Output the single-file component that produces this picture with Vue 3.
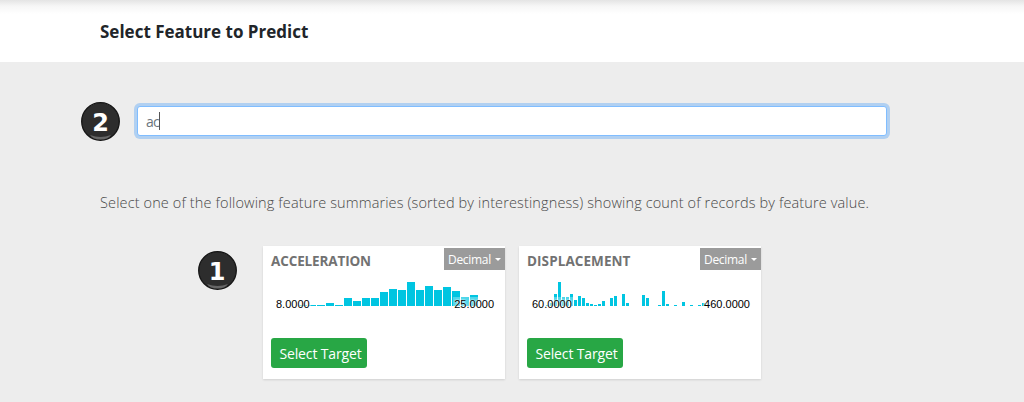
<script setup>
const cards = [
  {
    name: 'ACCELERATION', min: '8.0000', max: '25.0000', kind: 'accel', barWidth: 8,
    bars: [[36, 1], [45, 1], [54, 1], [63, 3], [72, 1], [81, 8], [90, 5], [99, 8], [108, 8], [117, 14], [126, 17], [135, 16], [144, 24], [153, 16], [162, 20], [171, 16], [180, 19], [189, 15], [198, 9], [207, 11]],
  },
  {
    name: 'DISPLACEMENT', min: '60.0000', max: '460.0000', kind: 'disp', barWidth: 3,
    bars: [[27, 1], [31, 3], [35, 12], [39, 24], [43, 9], [47, 9], [51, 12], [55, 6], [59, 10], [63, 8], [67, 3], [71, 2], [75, 1], [79, 2], [83, 5], [91, 8], [95, 10], [103, 12], [107, 3], [123, 11], [127, 8], [139, 1], [143, 15], [147, 2], [155, 1], [163, 4], [171, 1], [179, 1], [183, 3]],
  },
]
</script>

<template>
  <div class="page">
    <header class="header"><h1><span>Select Feature to Predict</span></h1></header>
    <main>
      <div class="search">
        <svg class="badge" width="39" height="39" viewBox="0 0 39 39">
          <circle cx="19.5" cy="19.5" r="18.8" fill="#2d2d2d" stroke="#151515" stroke-width="1.3" />
          <path d="M9 33Q19.5 37 30 33Q27 37.500 19.500 37.500T9 33Z" fill="#666" />
          <text x="19.5" y="28.700" text-anchor="middle">2</text>
        </svg>
        <div class="input"><span class="typed">ac</span><i class="caret"></i></div>
      </div>
      <p class="hint"><span>Select one of the following feature summaries (sorted by interestingness) showing count of records by feature value.</span></p>
      <div class="cards">
        <svg class="badge" width="39" height="39" viewBox="0 0 39 39">
          <circle cx="19.5" cy="19.5" r="18.8" fill="#2d2d2d" stroke="#151515" stroke-width="1.3" />
          <path d="M9 33Q19.500 37 30 33Q27 37.500 19.500 37.500T9 33Z" fill="#666" />
          <text x="19" y="28.700" text-anchor="middle">1</text>
        </svg>
        <section v-for="c in cards" :key="c.name" class="card">
          <div class="top">
            <h2 :class="c.kind">{{ c.name }}</h2>
            <button class="type"><span>Decimal</span><i class="arrow"></i></button>
          </div>
          <div class="chart">
            <svg width="242" height="24" shape-rendering="crispEdges">
              <rect v-for="b in c.bars" :key="b[0]" :x="b[0]" :y="24 - b[1]" :width="c.barWidth" :height="b[1]" fill="#00c5e1" />
            </svg>
            <span class="label min">{{ c.min }}</span>
            <span class="label max">{{ c.max }}</span>
          </div>
          <button class="select"><span>Select Target</span></button>
        </section>
      </div>
    </main>
  </div>
</template>

<style>
body { margin: 0; overflow: hidden; }
</style>

<style scoped>
.page { box-sizing: border-box; height: 402px; background: #ededed; font-family: "Open Sans", "Noto Sans", sans-serif; overflow: hidden; }
.header { height: 62px; background: linear-gradient(#e4e4e4, #f6f6f6 6px, #fff 14px); padding-left: 100px; }
h1 { margin: 0; font-size: 17px; line-height: 63px; font-weight: 700; color: #212529; letter-spacing: 0; white-space: nowrap; }
main { padding-top: 39px; }
.search { display: flex; align-items: center; height: 40px; padding-left: 81px; }
.badge { flex: none; display: block; overflow: visible; }
.search .badge { margin-top: 1px; }
.badge text { font: 700 24px "DejaVu Sans", sans-serif; fill: #fff; }
.input { box-sizing: border-box; width: 750px; height: 30px; margin-left: 17px; padding-left: 8px; display: flex; align-items: center; background: #fff; border: 1px solid #80bdff; border-radius: 3px; box-shadow: 0 0 0 3px #b1d0f1; color: #6c757d; font-size: 14px; }
.caret { width: 1px; height: 18px; background: #555; }
.typed { letter-spacing: -0.7px; }
.hint { margin: 51px 0 0 100px; height: 22px; line-height: 22px; font-size: 14.5px; font-weight: 300; color: #484848; letter-spacing: 0.13px; white-space: nowrap; }
.cards { display: flex; align-items: flex-start; margin-top: 32px; padding-left: 198px; }
.cards .badge { margin: 5px 26px 0 0; }
.card { flex: none; width: 242px; height: 133px; margin-right: 14px; background: #fff; box-shadow: 0 1px 2px rgba(0, 0, 0, .12); }
.top { display: flex; justify-content: space-between; height: 36px; padding-left: 8px; }
h2 { margin: 0; font-size: 13.5px; line-height: 30px; font-weight: 700; color: #727272; }
.accel { letter-spacing: -0.13px; }
.disp { letter-spacing: 0.08px; }
button { border: 0; font-family: inherit; color: #fff; white-space: nowrap; }
.type { box-sizing: border-box; display: flex; align-items: center; width: 61px; height: 22px; margin-top: 2px; padding: 0 4px; background: #9b9b9b; font-size: 12px; }
.type span { letter-spacing: -0.3px; }
.arrow { margin-left: auto; border: 3.500px solid transparent; border-top-color: #fff; border-bottom: 0; }
.chart { position: relative; height: 24px; }
.chart svg { display: block; }
.label { position: absolute; top: 15px; padding: 0 1px; height: 15px; line-height: 15px; font-family: "Liberation Sans", Arial, sans-serif; font-size: 11px; color: #000; background: rgba(255, 255, 255, .3); text-shadow: 0 0 2px #fff, 0 0 2px #fff; }
.min { left: 12px; }
.max { right: 10px; }
.select { display: block; height: 30px; width: 96px; margin: 32px 0 0 8px; padding: 1px 0 0 3px; border-radius: 3px; background: #28a745; font-size: 14px; letter-spacing: -0.15px; }
</style>
